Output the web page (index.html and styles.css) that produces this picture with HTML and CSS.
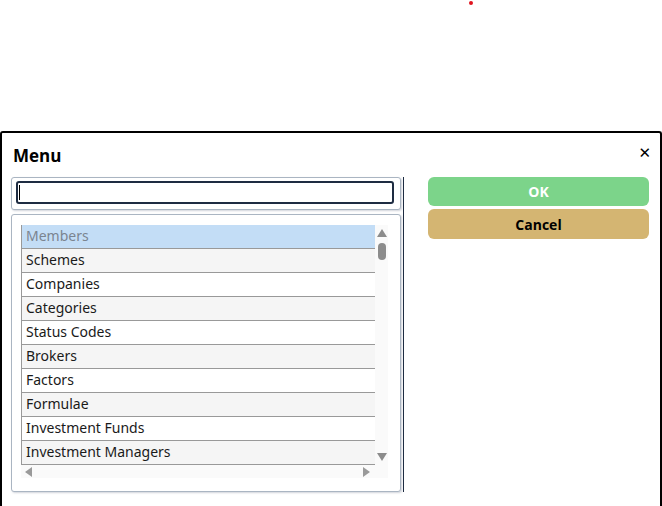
FILE: index.html
```html
<!DOCTYPE html>
<html>
<head>
<meta charset="utf-8">
<link rel="stylesheet" href="styles.css">
</head>
<body>
<div class="dot"></div>
<div class="dialog">
  <div class="header">
    <span class="title">Menu</span>
    <span class="close">&#x2715;</span>
  </div>
  <div class="body">
    <div class="left">
      <div class="panel search-panel">
        <div class="input"><span class="caret"></span></div>
      </div>
      <div class="panel list-panel">
        <div class="grid">
          <div class="rows">
            <div class="row sel">Members</div>
            <div class="row alt">Schemes</div>
            <div class="row">Companies</div>
            <div class="row alt">Categories</div>
            <div class="row">Status Codes</div>
            <div class="row alt">Brokers</div>
            <div class="row">Factors</div>
            <div class="row alt">Formulae</div>
            <div class="row">Investment Funds</div>
            <div class="row alt">Investment Managers</div>
          </div>
          <div class="vscroll">
            <span class="arr up"></span>
            <span class="thumb"></span>
            <span class="arr down"></span>
          </div>
          <div class="hscroll">
            <span class="arr left-a"></span>
            <span class="arr right-a"></span>
          </div>
          <div class="corner"></div>
        </div>
      </div>
    </div>
    <div class="sep"></div>
    <div class="right">
      <button class="btn ok">OK</button>
      <button class="btn cancel">Cancel</button>
    </div>
  </div>
</div>
</body>
</html>
```
FILE: styles.css
```css
html, body {
  margin: 0;
  padding: 0;
  background: #fff;
  overflow: hidden;
  height: 506px;
}
body {
  font-family: "Open Sans", "Noto Sans", sans-serif;
  position: relative;
}
.dot {
  position: absolute;
  left: 469px;
  top: 1px;
  width: 4px;
  height: 4px;
  border-radius: 50%;
  background: #e0141e;
}
.dialog {
  margin-top: 131px;
  width: 658px;
  height: 373px;
  border: 2px solid #000;
  border-bottom: none;
  border-radius: 3px 3px 0 0;
  box-sizing: content-box;
}
.header {
  height: 44px;
  display: flex;
  align-items: flex-start;
  justify-content: space-between;
  padding: 0 10px 0 11px;
}
.title {
  font-weight: 700;
  font-size: 17px;
  margin-top: 12px;
  color: #000;
  line-height: 22px;
}
.close {
  font-size: 15px;
  margin-top: 11px;
  margin-right: -1px;
  color: #000;
  font-family: "DejaVu Sans", sans-serif;
  line-height: 18px;
}
.body {
  display: flex;
  padding-left: 9px;
}
.left {
  width: 390px;
  display: flex;
  flex-direction: column;
  gap: 4px;
}
.panel {
  border: 1px solid #aab5c2;
  border-radius: 3px;
  box-shadow: 1px 1px 2px rgba(120, 130, 150, 0.35);
  box-sizing: border-box;
  background: #fff;
}
.search-panel {
  height: 33px;
  padding: 3px 6px 0 4px;
}
.input {
  height: 23px;
  border: 2px solid #1e2c42;
  border-radius: 3px;
  box-sizing: border-box;
  display: flex;
  align-items: center;
  padding-left: 1px;
}
.caret {
  width: 1px;
  height: 15px;
  background: #000;
}
.list-panel {
  height: 278px;
  padding: 10px 0 0 9px;
}
.grid {
  display: grid;
  grid-template-columns: 354px 13px;
  grid-template-rows: 240px 13px;
}
.rows {
  border-left: 1px solid #999;
  box-sizing: border-box;
}
.row {
  height: 24px;
  box-sizing: border-box;
  border-bottom: 1px solid #999;
  font-family: "Noto Sans", "Open Sans", sans-serif;
  font-size: 14px;
  line-height: 21px;
  padding-left: 4px;
  color: #1a1a1a;
  background: #fff;
}
.row.alt {
  background: #f5f5f5;
}
.row.sel {
  background: #c3ddf6;
  color: #7b8490;
}
.vscroll {
  background: #fafafa;
  position: relative;
}
.arr {
  position: absolute;
  width: 0;
  height: 0;
}
.up {
  left: 2px;
  top: 4px;
  border-left: 5px solid transparent;
  border-right: 5px solid transparent;
  border-bottom: 8px solid #8c8c8c;
}
.down {
  left: 2px;
  bottom: 4px;
  border-left: 5px solid transparent;
  border-right: 5px solid transparent;
  border-top: 8px solid #8c8c8c;
}
.thumb {
  position: absolute;
  left: 3px;
  top: 18px;
  width: 8px;
  height: 17px;
  border-radius: 4px;
  background: #8c8c8c;
}
.hscroll {
  background: #fafafa;
  position: relative;
}
.left-a {
  left: 4px;
  top: 2px;
  border-top: 5px solid transparent;
  border-bottom: 5px solid transparent;
  border-right: 7px solid #9a9a9a;
}
.right-a {
  right: 5px;
  top: 2px;
  border-top: 5px solid transparent;
  border-bottom: 5px solid transparent;
  border-left: 7px solid #9a9a9a;
}
.corner {
  background: #fafafa;
}
.sep {
  width: 1px;
  height: 315px;
  margin-left: 2px;
  background: #1e2c42;
}
.right {
  margin-left: 24px;
  width: 221px;
  display: flex;
  flex-direction: column;
  gap: 3px;
}
.btn {
  border: none;
  border-radius: 6px;
  font-family: "Open Sans", sans-serif;
  font-weight: 700;
  font-size: 14px;
  padding: 0;
  cursor: pointer;
}
.ok {
  height: 29px;
  background: #7cd48a;
  color: #fff;
}
.cancel {
  height: 30px;
  background: #d4b572;
  color: #000;
}
```
